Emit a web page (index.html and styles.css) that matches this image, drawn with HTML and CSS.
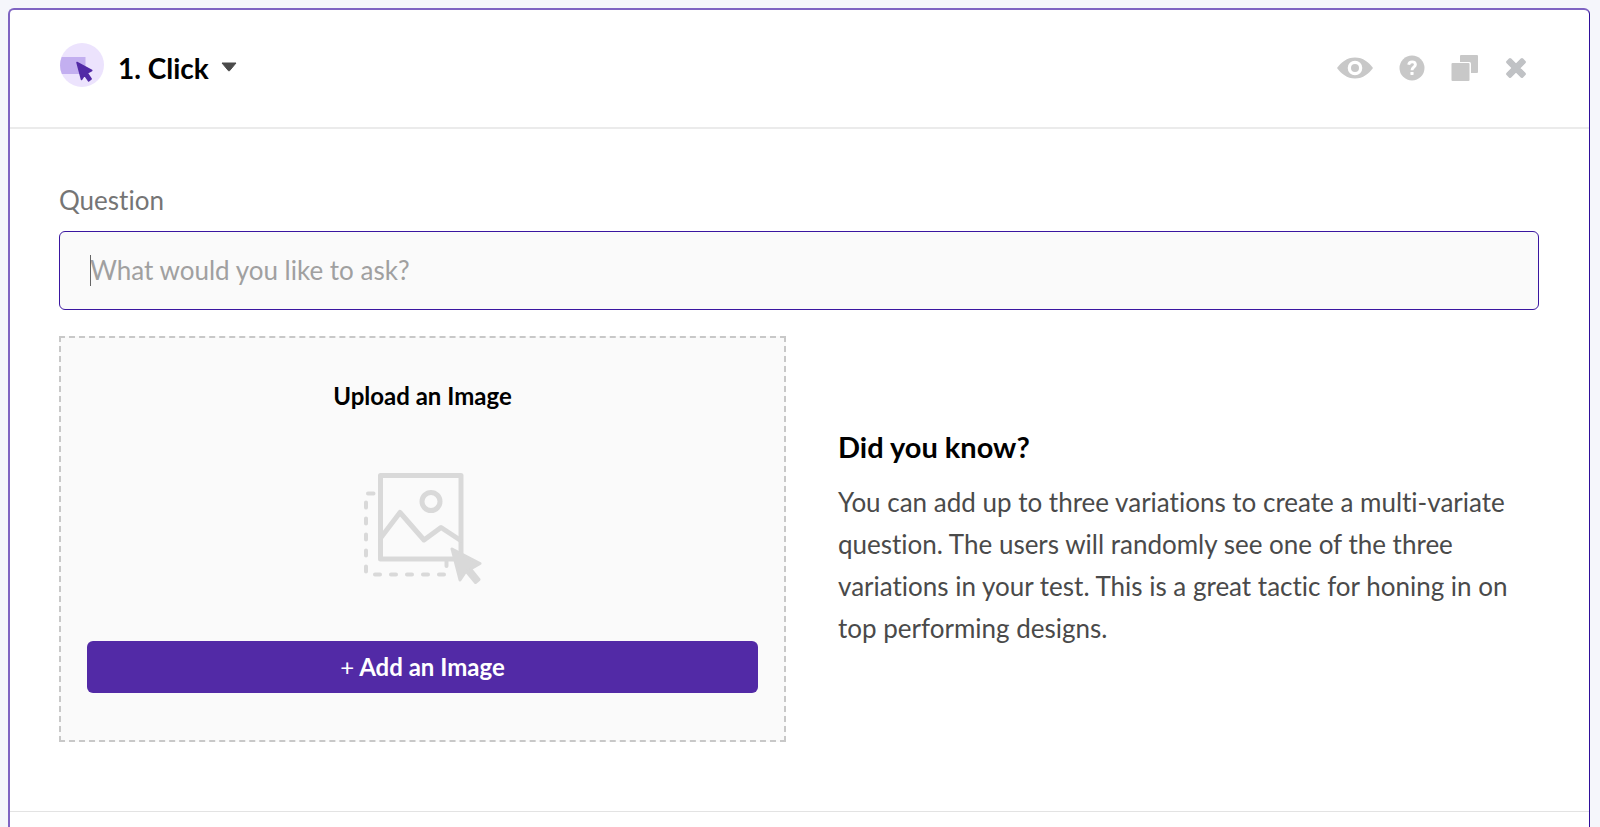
FILE: index.html
```html
<!DOCTYPE html>
<html lang="en">
<head>
<meta charset="utf-8">
<meta name="viewport" content="width=device-width, initial-scale=1">
<title>Click question</title>
<link rel="stylesheet" href="styles.css">
</head>
<body>
<main class="card">
  <header class="card-header">
    <button class="type-picker" type="button">
      <svg class="type-icon" viewBox="0 0 44 44" aria-hidden="true">
        <circle cx="22" cy="22" r="22" fill="#ece3fd"/>
        <path d="M1.700 14H25.500V31H1.900A22 22 0 0 1 1.700 14Z" fill="#c3aff0"/>
        <path d="M17 19.500L31.800 27.500L27.200 30L31.200 36L28.700 38L24.500 32L21.500 36.500Z" fill="#522aa6" stroke="#522aa6" stroke-width="1.500" stroke-linejoin="round"/>
      </svg>
      <span class="type-title">1. Click</span>
      <svg class="caret-down" viewBox="0 0 16 10" aria-hidden="true"><path d="M1 1H15L8.500 8.800H7.500Z" fill="#4a4a4a" stroke="#4a4a4a" stroke-linejoin="round"/></svg>
    </button>
    <div class="actions">
      <button class="action" type="button" aria-label="Preview">
        <svg width="36" height="22" viewBox="0 0 36 22" aria-hidden="true"><path fill="#c8c8c8" fill-rule="evenodd" d="M0 11C4 5.500 10 .5 18 .5S32 5.500 36 11C32 16.500 26 21.500 18 21.500S4 16.500 0 11ZM18 3.700A7.300 7.300 0 1 0 18 18.300A7.300 7.300 0 1 0 18 3.700Z"/><circle cx="18" cy="11" r="4" fill="#c8c8c8"/></svg>
      </button>
      <button class="action" type="button" aria-label="Help">
        <svg width="26" height="26" viewBox="0 0 26 26" aria-hidden="true"><circle cx="13" cy="13" r="12.500" fill="#c8c8c8"/><path d="M9.700 9.700C10 7.700 11.400 6.900 13.100 6.900C15.100 6.900 16.400 8 16.400 9.700C16.400 12.200 13 12.300 13 15.200" fill="none" stroke="#fff" stroke-width="2.900"/><rect x="11.400" y="16.900" width="3.200" height="3" rx=".6" fill="#fff"/></svg>
      </button>
      <button class="action" type="button" aria-label="Duplicate">
        <svg width="28" height="28" viewBox="0 0 28 28" aria-hidden="true"><rect x="9" y="1" width="18" height="18" rx="1" fill="#c8c8c8"/><rect x="0" y="8" width="20" height="20" rx="1.500" fill="#fff"/><rect x=".5" y="9" width="18" height="18" rx="1" fill="#c8c8c8"/></svg>
      </button>
      <button class="action" type="button" aria-label="Delete">
        <svg width="22" height="22" viewBox="0 0 22 22" aria-hidden="true"><path d="M3.800 3.800L18.200 18.200M18.200 3.800L3.800 18.200" stroke="#c0c2c5" stroke-width="6.200"/><path d="M2.600 5L5 2.600L19.400 17L17 19.400ZM17 2.600L19.400 5L5 19.400L2.600 17Z" fill="#c0c2c5" stroke="#c0c2c5" stroke-width="3" stroke-linejoin="round"/></svg>
      </button>
    </div>
  </header>
  <section class="card-body">
    <label class="label" for="question">Question</label>
    <div class="field">
      <input class="input" id="question" type="text" placeholder="What would you like to ask?">
      <span class="text-cursor" aria-hidden="true"></span>
    </div>
    <div class="columns">
      <div class="upload">
        <h2 class="upload-title">Upload an Image</h2>
        <svg class="upload-icon" viewBox="0 0 118 112" aria-hidden="true">
          <g fill="none" stroke="#d9d9d9" stroke-linecap="round" stroke-linejoin="round">
            <path d="M4 20.500H9.500M2 29.500V34.500M2 45.500V50.500M2 61.500V66.500M2 77.500V82.500M2 93.500V98.500M11 101.500H16M27 101.500H32M43 101.500H48M59 101.500H64M75 101.500H80M82.500 88V93" stroke-width="4"/>
            <rect x="16.500" y="2.500" width="80.500" height="83.500" stroke-width="5"/>
            <path d="M17 64.500L36 39.500L60 67L77 54.500L96 67" stroke-width="5"/>
            <circle cx="67" cy="28.500" r="9" stroke-width="5"/>
          </g>
          <path d="M88 76L116 90.500L106.500 96L115 106.500L111.500 109.500L102 98L96 107Z" fill="#d9d9d9" stroke="#d9d9d9" stroke-width="3" stroke-linejoin="round"/>
        </svg>
        <button class="add-button" type="button"><span class="plus">+</span> Add an Image</button>
      </div>
      <aside class="tip">
        <h2 class="tip-title">Did you know?</h2>
        <p class="tip-text">You can add up to three variations to create a multi-variate question. The users will randomly see one of the three variations in your test. This is a great tactic for honing in on top performing designs.</p>
      </aside>
    </div>
  </section>
  <footer class="card-footer"></footer>
</main>
</body>
</html>
```
FILE: styles.css
```css
*, *::before, *::after { box-sizing: border-box; }
body {
  margin: 0;
  padding: 8px 10px 0 8px;
  min-height: 100vh;
  display: flex;
  background: #f5f6fb;
  color: #000;
  font-family: Lato, "Open Sans", sans-serif;
  font-size: 26px;
  font-variant-ligatures: none;
}
button, input { font: inherit; font-variant-ligatures: none; color: inherit; }
button { border: 0; background: none; padding: 0; cursor: pointer; }
h2, p { margin: 0; }
svg { display: block; }
.card {
  flex: 1;
  display: flex;
  flex-direction: column;
  background: #fff;
  border: 2px solid #7f64c2;
  border-right: 1px solid #2f0f9a;
  border-bottom: 0;
  border-radius: 6px 6px 0 0;
}
.card-header {
  display: flex;
  align-items: center;
  justify-content: space-between;
  height: 119px;
  padding: 0 62px 2px 50px;
  border-bottom: 2px solid #ebebeb;
}
.type-picker { display: flex; align-items: center; }
.type-icon { width: 44px; height: 44px; margin: 0 14px 6px 0; }
.type-title { font-size: 28px; line-height: 34px; font-weight: 700; }
.caret-down { width: 16px; height: 10px; margin: 0 0 2px 12px; }
.actions { display: flex; align-items: center; gap: 26px; }
.card-body {
  padding: 53px 50px 69px 49px;
  border-bottom: 1px solid #e3e3e3;
}
.label { display: block; line-height: 36px; margin-bottom: 13px; color: #757575; }
.field { position: relative; margin-bottom: 26px; }
.input {
  display: block;
  width: 100%;
  height: 79px;
  padding: 0 30px 2px;
  border: 1px solid #3a16a0;
  border-radius: 6px;
  background: #fafafa;
  outline: 0;
}
.input::placeholder { color: #a0a0a0; opacity: 1; }
.text-cursor {
  position: absolute;
  left: 31px;
  top: 24px;
  width: 1px;
  height: 31px;
  background: #666;
}
.columns { display: grid; grid-template-columns: 1fr 1fr; gap: 26px; }
.upload {
  display: flex;
  flex-direction: column;
  align-items: center;
  padding: 43px 26px 47px;
  border: 2px dashed #c8c8c8;
  background: #fafafa;
}
.upload-title { font-size: 24px; line-height: 30px; font-weight: 700; }
.upload-icon { width: 118px; height: 112px; margin: 62px 0 56px; }
.add-button {
  width: 100%;
  height: 52px;
  padding-bottom: 2px;
  border-radius: 6px;
  background: #522aa6;
  color: #fff;
  font-size: 24px;
  font-weight: 700;
}
.plus { font-weight: 400; }
.tip { align-self: center; padding-left: 26px; }
.tip-title { font-size: 29px; line-height: 34px; font-weight: 700; margin-bottom: 17px; }
.tip-text { line-height: 42px; color: #4a4a4a; }
.card-footer { flex: 1; }
```
